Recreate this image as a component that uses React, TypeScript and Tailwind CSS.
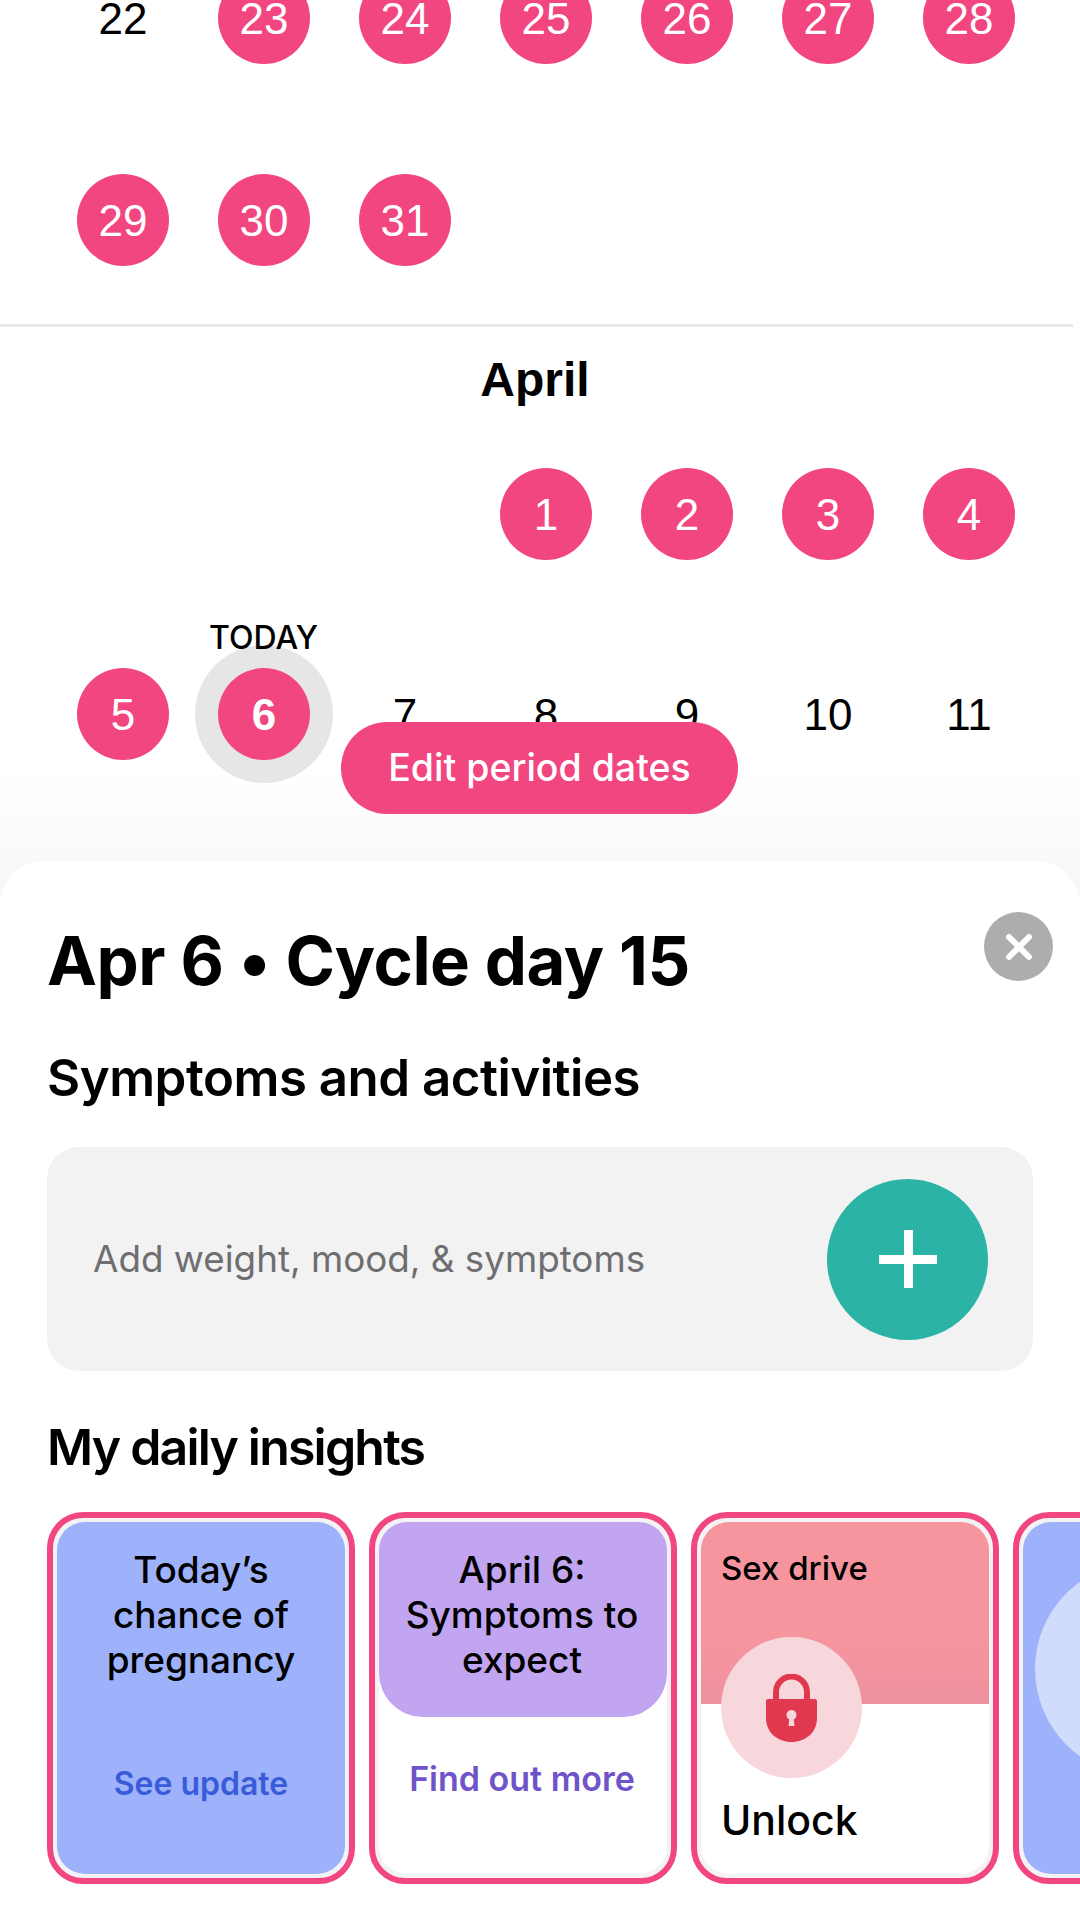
const Day = ({ n, on, today }: { n?: number; on?: boolean; today?: boolean }) => (
  <div className="flex items-center justify-center">
    {n === undefined ? null : on ? (
      <div className="relative flex h-[92px] w-[92px] items-center justify-center rounded-full bg-[#f24680] text-white">
        {today && (
          <>
            <div className="absolute -inset-[23px] -z-10 rounded-full bg-[#e6e6e6]" />
            <div className="absolute -top-[49px] left-1/2 -translate-x-1/2 font-['Inter'] text-[32px] font-medium leading-[38px] text-black">TODAY</div>
          </>
        )}
        <span className={today ? "pl-px pt-[2px] font-bold" : "pl-px pt-[2px]"}>{n}</span>
      </div>
    ) : (
      <span className="pl-px pt-[2px] text-black">{n}</span>
    )}
  </div>
);

const Row = ({ cells, className }: { cells: (number | [number] | null)[]; className: string }) => (
  <div className={`grid grid-cols-[repeat(7,141px)] items-center px-[52px] ${className}`}>
    {cells.map((c, i) =>
      c === null ? <Day key={i} /> : Array.isArray(c) ? <Day key={i} n={c[0]} /> : <Day key={i} n={c} on today={c === 6} />
    )}
  </div>
);

const Card = ({ children }: { children: React.ReactNode }) => (
  <div className="relative h-[372px] w-[308px] shrink-0 overflow-hidden rounded-[36px] border-[6px] border-[#f24680] bg-[#f3f3f5] p-[4px]">
    {children}
  </div>
);

export default function App() {
  return (
    <div className="relative isolate h-[1920px] w-[1080px] overflow-hidden bg-white font-['Inter',sans-serif]">
      <div className="absolute inset-x-0 top-[770px] -z-10 h-[140px] bg-gradient-to-b from-white to-[#f6f6f7]" />

      <div className="-mt-[83px] font-['Liberation_Sans',sans-serif] text-[44px] leading-none">
        <Row className="h-[202px]" cells={[[22], 23, 24, 25, 26, 27, 28]} />
        <Row className="h-[202px]" cells={[29, 30, 31, null, null, null, null]} />
        <div className="mt-[3px] h-[3px] w-[1073px] bg-[#e9e9e9]" />
        <div className="flex h-[105px] items-center justify-center pr-[10px] text-[48px] font-bold text-black">April</div>
        <Row className="h-[164px]" cells={[null, null, null, 1, 2, 3, 4]} />
        <Row className="h-[236px]" cells={[5, 6, [7], [8], [9], [10], [11]]} />
      </div>

      <div className="absolute left-[341px] top-[722px] flex h-[92px] w-[397px] items-center justify-center rounded-full bg-[#f24680] text-[37.500px] font-medium text-white">
        Edit period dates
      </div>

      <div className="mt-[29px] h-[1059px] rounded-t-[44px] bg-white px-[47px] pt-[62px]">
        <div className="flex items-start justify-between">
          <h1 className="whitespace-nowrap text-[67px] font-bold leading-[76px] tracking-[-0.5px] text-black">Apr 6 • Cycle day 15</h1>
          <div className="-mr-[20px] -mt-[11px] flex h-[69px] w-[69px] items-center justify-center rounded-full bg-[#adadad]">
            <svg width="32" height="32" viewBox="0 0 32 32" fill="none" stroke="white" strokeWidth="6" strokeLinecap="round">
              <path d="M6 6 26 26M26 6 6 26" />
            </svg>
          </div>
        </div>
        <h2 className="mt-[49px] text-[51px] font-semibold leading-[60px] tracking-[-0.5px] text-black">Symptoms and activities</h2>
        <div className="mt-[39px] flex h-[224px] w-[986px] items-center justify-between rounded-[32px] bg-[#f2f2f3] pl-[46px] pr-[45px]">
          <span className="text-[36.800px] text-[#6e6e70]">Add weight, mood, &amp; symptoms</span>
          <div className="flex h-[161px] w-[161px] items-center justify-center rounded-full bg-[#2bb3a5]">
            <svg width="58" height="58" viewBox="0 0 58 58" fill="white">
              <path d="M25 0h9v25h24v9H34v24h-9V34H0v-9h25z" />
            </svg>
          </div>
        </div>
        <h2 className="mt-[46px] text-[50px] font-semibold leading-[60px] tracking-[-1.8px] text-black">My daily insights</h2>
        <div className="-mr-[47px] mt-[35px] flex gap-[14px] overflow-hidden">
          <Card>
            <div className="flex h-full flex-col items-center rounded-[28px] bg-[#9db2fb] pt-[25px] text-center">
              <div className="text-[37px] font-medium leading-[45px] text-black">Today’s<br />chance of<br />pregnancy</div>
              <div className="mt-[78px] text-[32px] font-semibold text-[#3a5bd9]">See update</div>
            </div>
          </Card>
          <Card>
            <div className="h-full rounded-[28px] bg-white">
              <div className="flex h-[195px] flex-col items-center rounded-t-[28px] rounded-b-[44px] bg-[#c1a5f1] pt-[25px] pr-[2px] text-center">
                <div className="text-[37px] font-medium leading-[45px] text-black">April 6:<br />Symptoms to<br />expect</div>
              </div>
              <div className="mt-[36px] pr-[2px] text-center text-[34px] font-semibold text-[#7153c9]">Find out more</div>
            </div>
          </Card>
          <Card>
            <div className="h-full rounded-[28px] bg-white">
              <div className="h-[182px] rounded-t-[28px] bg-gradient-to-b from-[#f7959f] from-60% to-[#ee919e] px-[20px] pt-[28px] text-[33px] font-medium leading-[36px] text-black">
                Sex drive
              </div>
            </div>
            <div className="absolute left-[24px] top-[119px] flex h-[141px] w-[141px] items-center justify-center rounded-full bg-[#f7d6dc]">
              <svg width="51" height="68" viewBox="0 0 51 68" fill="none">
                <path d="M10 30V18a15.500 15.500 0 0 1 31 0v12" stroke="#e0394f" strokeWidth="6" />
                <path d="M2 25h47a2 2 0 0 1 2 2v17c0 15-12 24-25.500 24S0 59 0 44V27a2 2 0 0 1 2-2z" fill="#e0394f" />
                <circle cx="25.500" cy="41" r="5" fill="#f7d6dc" />
                <path d="M23.500 43h4l1 9h-6z" fill="#f7d6dc" />
              </svg>
            </div>
            <div className="absolute left-[24px] top-[278px] text-[41px] font-medium leading-[48px] text-black">Unlock</div>
          </Card>
          <Card>
            <div className="relative h-full rounded-l-[28px] bg-[#9db2fb]">
              <div className="absolute left-[12px] top-[40px] h-[214px] w-[214px] rounded-full bg-[#d1dcfd]" />
            </div>
          </Card>
        </div>
      </div>
    </div>
  );
}
